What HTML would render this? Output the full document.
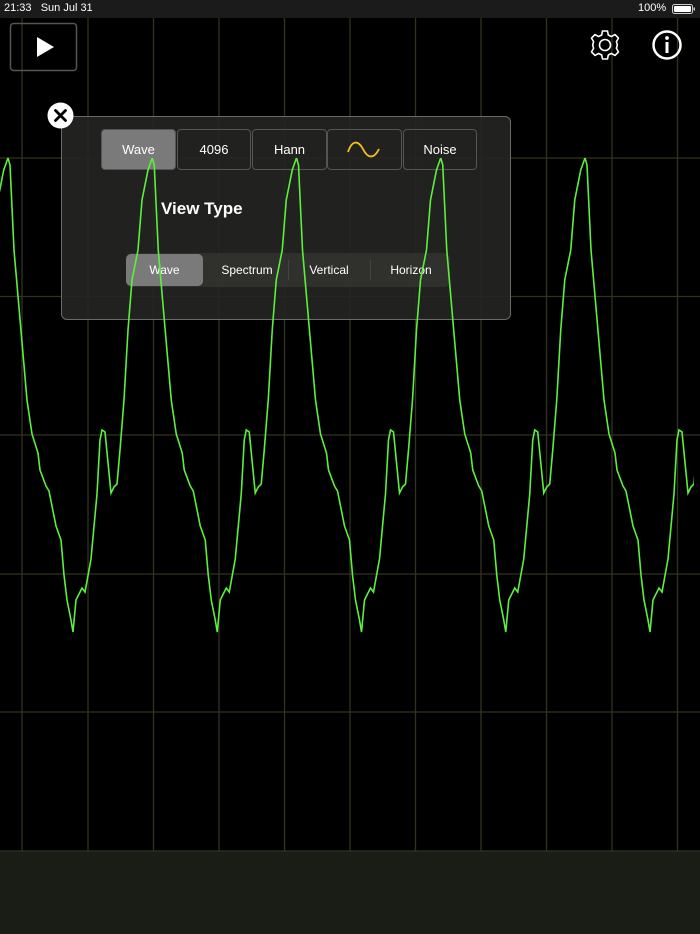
<!DOCTYPE html>
<html><head><meta charset="utf-8"><style>
html,body{margin:0;padding:0;background:#000;width:700px;height:934px;overflow:hidden;font-family:"Liberation Sans",sans-serif;}
.abs{position:absolute;}
</style></head><body>
<div class="abs" style="left:0;top:0;width:700px;height:934px;">
<svg width="700" height="934" style="position:absolute;left:0;top:0">
 <rect x="0" y="0" width="700" height="18" fill="#1b1b1b"/>
 <rect x="0" y="851" width="700" height="83" fill="#1a1c16"/>
 <g stroke="#323221" stroke-width="1.3">
  <line x1="22" y1="18" x2="22" y2="851"/><line x1="88" y1="18" x2="88" y2="851"/>
  <line x1="153.5" y1="18" x2="153.5" y2="851"/><line x1="219" y1="18" x2="219" y2="851"/>
  <line x1="284.5" y1="18" x2="284.5" y2="851"/><line x1="350" y1="18" x2="350" y2="851"/>
  <line x1="415.5" y1="18" x2="415.5" y2="851"/><line x1="481" y1="18" x2="481" y2="851"/>
  <line x1="546.5" y1="18" x2="546.5" y2="851"/><line x1="612" y1="18" x2="612" y2="851"/>
  <line x1="677.5" y1="18" x2="677.5" y2="851"/>
  <line x1="0" y1="158" x2="700" y2="158"/><line x1="0" y1="296.5" x2="700" y2="296.5"/>
  <line x1="0" y1="435" x2="700" y2="435"/><line x1="0" y1="574" x2="700" y2="574"/>
  <line x1="0" y1="712" x2="700" y2="712"/><line x1="0" y1="851" x2="700" y2="851"/>
 </g>
 <!-- play box -->
 <rect x="10.5" y="23.5" width="66" height="47" rx="3" fill="none" stroke="#555" stroke-width="1.5"/>
 <path d="M37,37 L54,47 L37,57 Z" fill="#fff"/>
 <!-- gear -->
 <g transform="translate(605,45)" fill="none" stroke="#fff" stroke-width="1.6">
  <path d="M-2.5,-14 L2.5,-14 L3.3,-10 L6.4,-8.4 L10,-10.4 L13.5,-6.9 L11.4,-3.4 L12.3,0 L11.4,3.4 L13.5,6.9 L10,10.4 L6.4,8.4 L3.3,10 L2.5,14 L-2.5,14 L-3.3,10 L-6.4,8.4 L-10,10.4 L-13.5,6.9 L-11.4,3.4 L-12.3,0 L-11.4,-3.4 L-13.5,-6.9 L-10,-10.4 L-6.4,-8.4 L-3.3,-10 Z" stroke-linejoin="round"/>
  <circle r="5.5"/>
 </g>
 <!-- info -->
 <circle cx="667" cy="45" r="13.5" fill="none" stroke="#fff" stroke-width="2.5"/>
 <circle cx="667" cy="38" r="1.9" fill="#fff"/>
 <rect x="665.5" y="42" width="3" height="11" fill="#fff"/>
 <!-- battery -->
 <rect x="672.5" y="4.5" width="20" height="9" rx="2" fill="none" stroke="#ccc" stroke-width="1"/>
 <rect x="674" y="6" width="17" height="6" rx="1" fill="#fff"/>
 <rect x="693.5" y="7.5" width="1.5" height="3" fill="#ccc"/>
</svg>
<div class="abs" style="left:4px;top:2px;color:#fff;font-size:11px;">21:33&nbsp;&nbsp;&nbsp;Sun Jul 31</div>
<div class="abs" style="left:638px;top:2px;color:#fff;font-size:11px;">100%</div>

<!-- panel -->
<div class="abs" style="left:61px;top:116px;width:448px;height:202px;border:1.5px solid #6a6a6a;border-radius:6px;background:rgba(36,36,34,0.92);"></div>
<div class="abs" style="left:101px;top:129px;width:73px;height:39px;border:1.5px solid #555;border-radius:4px;background:#7a7a7a;color:#fff;font-size:13px;text-align:center;line-height:40px;">Wave</div>
<div class="abs" style="left:177px;top:129px;width:72px;height:39px;border:1.5px solid #555;border-radius:4px;color:#fff;font-size:13px;text-align:center;line-height:40px;">4096</div>
<div class="abs" style="left:252px;top:129px;width:73px;height:39px;border:1.5px solid #555;border-radius:4px;color:#fff;font-size:13px;text-align:center;line-height:40px;">Hann</div>
<div class="abs" style="left:327px;top:129px;width:73px;height:39px;border:1.5px solid #555;border-radius:4px;"></div>
<svg class="abs" style="left:346px;top:138px" width="36" height="24"><path d="M2,14 C6,2 12,2 17,11 C22,21 28,21 33,11" fill="none" stroke="#f0c020" stroke-width="1.8"/></svg>
<div class="abs" style="left:403px;top:129px;width:72px;height:39px;border:1.5px solid #555;border-radius:4px;color:#fff;font-size:13px;text-align:center;line-height:40px;">Noise</div>
<div class="abs" style="left:161px;top:199px;color:#fff;font-size:17px;font-weight:bold;">View Type</div>
<div class="abs" style="left:126px;top:253px;width:324px;height:34px;border-radius:6px;background:rgba(50,50,48,0.85);"></div>
<div class="abs" style="left:126px;top:254px;width:77px;height:32px;border-radius:5px;background:#7a7a7a;color:#fff;font-size:12px;text-align:center;line-height:32px;">Wave</div>
<div class="abs" style="left:206px;top:254px;width:82px;height:32px;color:#fff;font-size:12px;text-align:center;line-height:32px;">Spectrum</div>
<div class="abs" style="left:288px;top:260px;width:1px;height:20px;background:#444;"></div>
<div class="abs" style="left:288px;top:254px;width:82px;height:32px;color:#fff;font-size:12px;text-align:center;line-height:32px;">Vertical</div>
<div class="abs" style="left:370px;top:260px;width:1px;height:20px;background:#444;"></div>
<div class="abs" style="left:370px;top:254px;width:82px;height:32px;color:#fff;font-size:12px;text-align:center;line-height:32px;">Horizon</div>

<!-- waveform on top -->
<svg width="700" height="934" style="position:absolute;left:0;top:0">
 <defs>
  <path id="per" d="M0,158 L2,165 L6,250 L19,400 L24,434 L30,453 L32,470 L38,486 L41,491 L48,526 L53,540 L56,575 L59,600 L63,620 L65,632 L68,600 L74,588 L77,592 L83,559 L89,494 L92,440 L94,430 L97,432 L103,493 L106,487 L109,484 L112,450 L116,400 L120,330 L124,280 L130,250 L134,200 L140,170 L144.25,158" fill="none"/>
  <clipPath id="cp"><rect x="0" y="18" width="694" height="833"/></clipPath>
 </defs>
 <g stroke="#5cf03c" stroke-width="1.6" fill="none" clip-path="url(#cp)">
  <use href="#per" x="-136.25"/><use href="#per" x="8"/><use href="#per" x="152.25"/>
  <use href="#per" x="296.5"/><use href="#per" x="440.75"/><use href="#per" x="585"/>
 </g>
</svg>
<!-- close -->
<svg class="abs" style="left:47px;top:102px" width="27" height="27"><circle cx="13.5" cy="13.5" r="13" fill="#fff"/><path d="M8.5,8.5 L18.5,18.5 M18.5,8.5 L8.5,18.5" stroke="#000" stroke-width="2.8" stroke-linecap="round"/></svg>
</div>
</body></html>
